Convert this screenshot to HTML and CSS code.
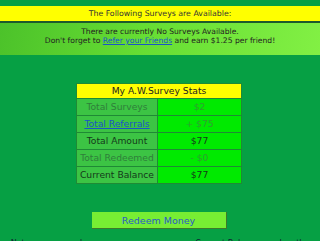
FILE: index.html
```html
<!DOCTYPE html>
<html>
<head>
<meta charset="utf-8">
<link rel="stylesheet" href="styles.css">
</head>
<body>
<div class="top-strip"></div>
<div class="notice-title">The Following Surveys are Available:</div>
<div class="notice-body">
  <p class="line">There are currently No Surveys Available.</p>
  <p class="line">Don't forget to <a href="#" class="link">Refer your Friends</a> and earn $1.25 per friend!</p>
</div>
<table class="stats">
  <tr><th colspan="2" class="stats-head">My A.W.Survey Stats</th></tr>
  <tr><td class="label faded">Total Surveys</td><td class="value faded">$2</td></tr>
  <tr><td class="label"><a href="#" class="link">Total Referrals</a></td><td class="value faded">+ $75</td></tr>
  <tr><td class="label strong">Total Amount</td><td class="value strong">$77</td></tr>
  <tr><td class="label faded">Total Redeemed</td><td class="value faded">- $0</td></tr>
  <tr><td class="label strong">Current Balance</td><td class="value strong">$77</td></tr>
</table>
<div class="actions">
  <button class="redeem">Redeem Money</button>
</div>
<p class="footnote">Note: you can redeem your money once your Current Balance reaches the minimum payout.</p>
</body>
</html>
```
FILE: styles.css
```css
html, body {
  margin: 0;
  padding: 0;
}
body {
  background: #06a044;
  font-family: "DejaVu Sans", Verdana, sans-serif;
  color: #111;
  height: 241px;
  overflow: hidden;
}
.top-strip {
  height: 6px;
}
.notice-title {
  background: #ffff00;
  height: 15px;
  line-height: 15px;
  text-align: center;
  font-size: 7.8px;
  color: #333;
  border-bottom: 2px solid #1d5a2c;
}
.notice-body {
  height: 32px;
  background: linear-gradient(100deg, #4cc22a 0%, #66dd33 45%, #82f044 100%);
  text-align: center;
  font-size: 7.6px;
  color: #222;
  padding-top: 4px;
  box-sizing: border-box;
}
.line {
  margin: 0;
  line-height: 9px;
}
.link {
  color: #1a55c8;
  text-decoration: underline;
}
.stats {
  border-collapse: collapse;
  width: 166px;
  margin: 28px auto 0 auto;
  position: relative;
  left: -1px;
  font-size: 9.2px;
  line-height: 10px;
}
.stats td, .stats th {
  border: 1px solid #1f8a35;
  padding: 0;
  text-align: center;
  height: 16px;
}
.stats .stats-head {
  background: #ffff00;
  font-weight: normal;
  color: #222;
  height: 14px;
}
.label {
  background: #3cc444;
  width: 80px;
}
.value {
  background: #00ea00;
}
.faded {
  color: #2f7f3a;
}
.value.faded {
  color: #2fa02f;
}
.strong {
  color: #143a1a;
}
.actions {
  display: flex;
  justify-content: center;
  margin-top: 28px;
}
.redeem {
  width: 135px;
  height: 17px;
  background: #77ee33;
  border: none;
  border-right: 1px solid #3c7a2a;
  border-bottom: 1px solid #3c7a2a;
  color: #2a5ac8;
  font-family: "DejaVu Sans", Verdana, sans-serif;
  font-size: 9.5px;
  padding: 0;
  margin-left: -2px;
}
.footnote {
  margin: 10px 0 0 0;
  font-size: 8px;
  color: #123;
  text-align: center;
  line-height: 10px;
}
```
